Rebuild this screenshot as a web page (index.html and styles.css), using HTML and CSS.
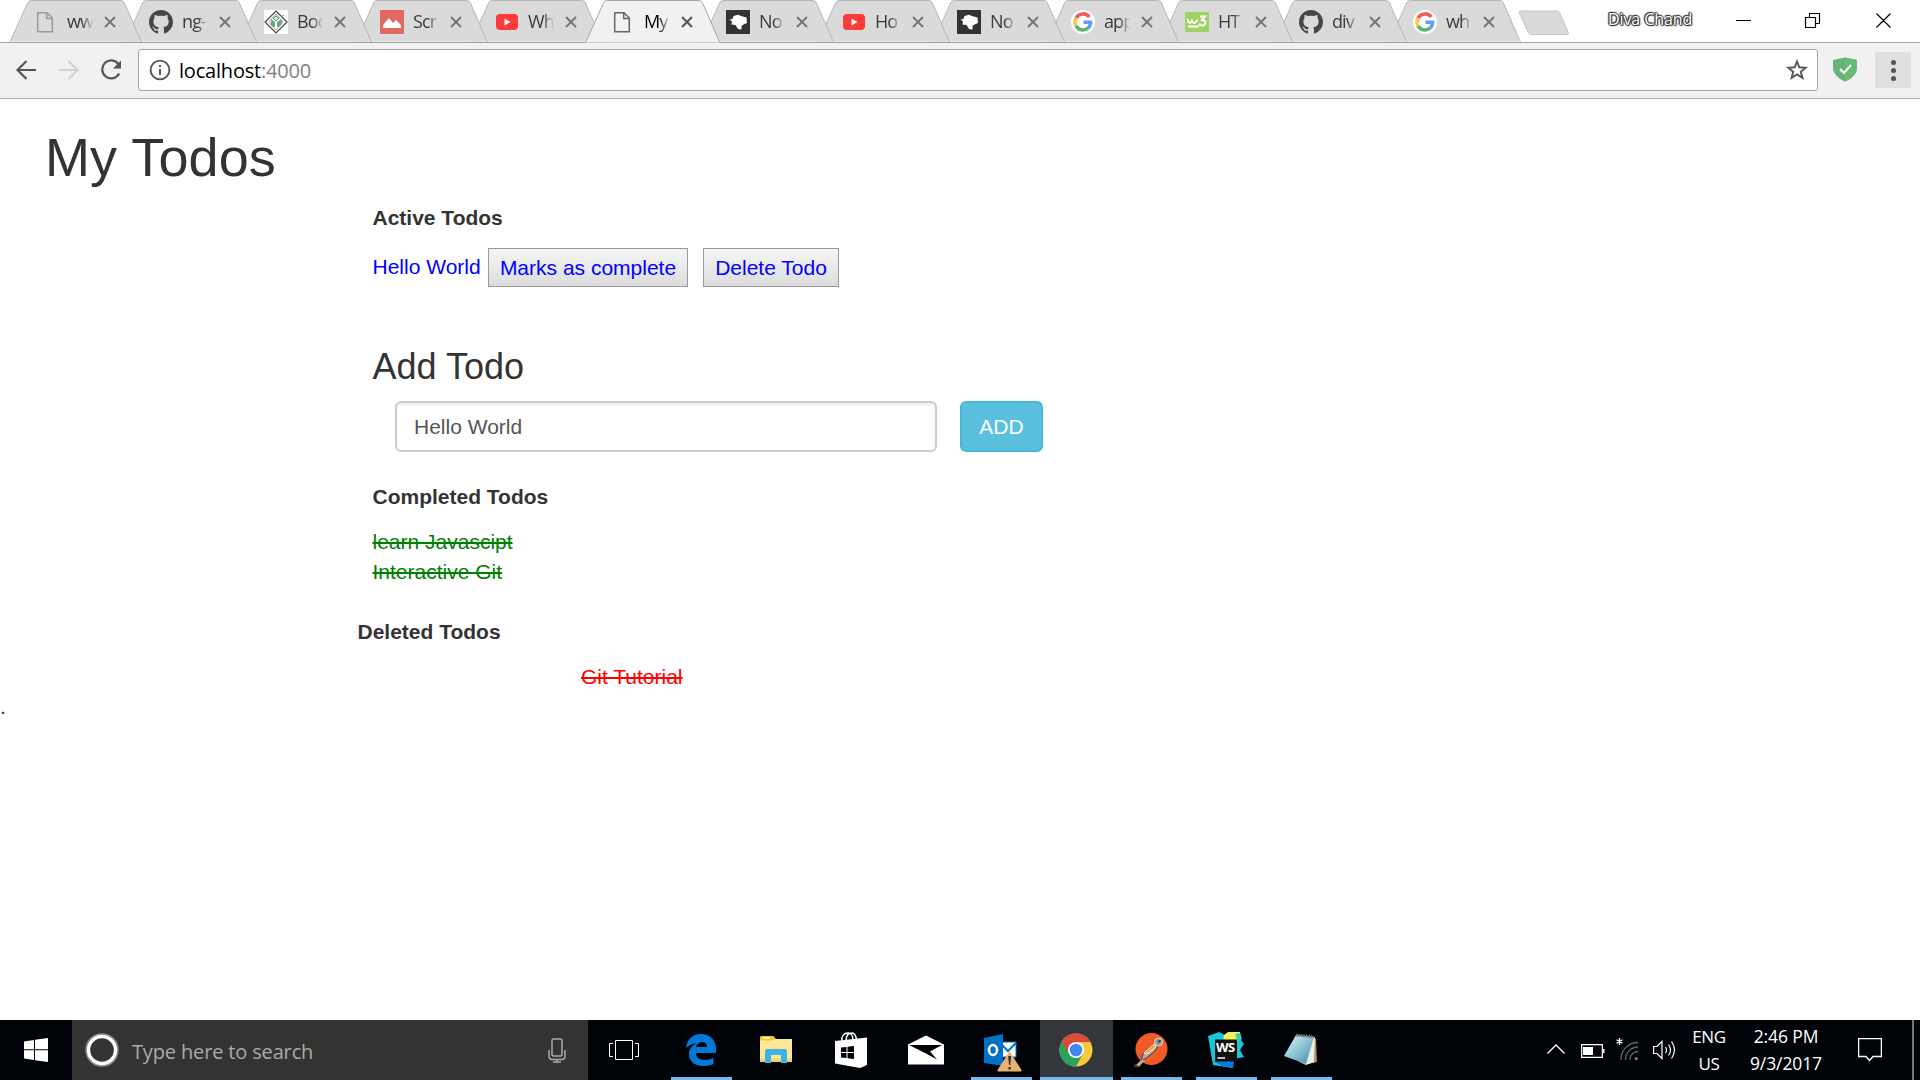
FILE: index.html
```html
<!DOCTYPE html>
<html lang="en">
<head>
<meta charset="utf-8">
<title>My Todos</title>
<link rel="stylesheet" href="styles.css">
</head>
<body>
<svg class="defs" aria-hidden="true">
  <symbol id="shape" viewBox="0 0 136 43"><path d="M0 42.500C1.200 42 1.600 40.500 2 39.500L18 4C19.300 1.500 20 .5 22.500 .5H113C116 .5 117 1.500 118 4L133.500 39.500C134 41 134.500 42.500 135.500 42.500"/></symbol>
  <symbol id="x" viewBox="0 0 12 12"><path d="M1 1 11 11M11 1 1 11" fill="none" stroke="currentColor" stroke-width="2"/></symbol>
  <symbol id="file" viewBox="0 0 24 24"><path d="M3.700 2.700H13L18.300 8V21.800H3.700ZM12.700 2.700V8.500H18.300" fill="none" stroke="currentColor" stroke-width="1.500"/></symbol>
  <symbol id="github" viewBox="0 0 16 16"><path fill="#464646" d="M8 0C3.580 0 0 3.580 0 8c0 3.540 2.290 6.530 5.470 7.590.4.070.55-.17.55-.38 0-.19-.010-.82-.010-1.490-2.010.37-2.530-.49-2.690-.94-.090-.23-.48-.94-.82-1.130-.28-.15-.68-.52-.010-.53.63-.010 1.080.58 1.230.82.72 1.210 1.870.87 2.330.66.070-.52.28-.87.510-1.070-1.780-.2-3.640-.89-3.640-3.950 0-.87.31-1.590.82-2.150-.080-.2-.36-1.020.080-2.120 0 0 .67-.21 2.200.82.64-.18 1.320-.27 2-.27s1.360.090 2 .27c1.530-1.040 2.200-.82 2.200-.82.44 1.100.16 1.920.080 2.120.51.56.82 1.270.82 2.150 0 3.070-1.870 3.750-3.650 3.950.29.25.54.73.54 1.480 0 1.070-.010 1.930-.010 2.200 0 .21.15.46.55.38A8.010 8.010 0 0 0 16 8c0-4.420-3.580-8-8-8Z"/></symbol>
  <symbol id="youtube" viewBox="0 0 24 24"><rect x="1" y="4" width="22" height="16" rx="4" fill="#ff3a3a"/><path d="M9.500 8.500 15.500 12 9.500 15.500Z" fill="#fff"/></symbol>
  <symbol id="node" viewBox="0 0 24 24"><path d="M0 0H24V24H0Z" fill="#333"/><path d="M3.500 9.500 6.500 9 7.500 6 12 4.700 15 6 20.500 7.500 21 13 17.500 14.500 15.500 16 15.500 19.500 12 19 9.500 15 5.500 14.500 6 11.500Z" fill="#fff"/></symbol>
  <symbol id="google" viewBox="0 0 24 24"><circle cx="12" cy="12" r="12" fill="#fff"/><g fill="none" stroke-width="3.600"><path d="M18.400 7A8 8 0 0 0 5 8.200" stroke="#f0605a"/><path d="M5 8.200A8 8 0 0 0 5 15.800" stroke="#fbc94e"/><path d="M5 15.800A8 8 0 0 0 17 18.200" stroke="#57b974"/><path d="M17 18.200A8 8 0 0 0 19.500 12.300H12.500" stroke="#659cf5"/></g></symbol>
</svg>

<header class="browser">
  <div class="strip">
    <div class="tab w115 z13"><svg class="shape"><use href="#shape"/></svg><svg class="fav file"><use href="#file"/></svg><span class="label">ww</span><svg class="close"><use href="#x"/></svg></div>
    <div class="tab w115 z12"><svg class="shape"><use href="#shape"/></svg><svg class="fav"><use href="#github"/></svg><span class="label">ng-</span><svg class="close"><use href="#x"/></svg></div>
    <div class="tab w116 z11"><svg class="shape"><use href="#shape"/></svg><svg class="fav" viewBox="0 0 24 24"><path d="M0 0H24V24H0Z" fill="#fff"/><path d="M12 1 23 12 12 23 1 12Z" fill="none" stroke="#444" stroke-width="1.200"/><path d="M12 4 19 12 12 20 4.500 12Z" fill="none" stroke="#aaa"/><path d="M7 9 11 12V17C8 17 6 15 7 12ZM13 17V12L18 9C18 14 17 17 13 17Z" fill="#6da583"/><path d="M9 8 12 6 15 8 12 11ZM17 7 20 5" fill="#cfe2d5" stroke="#5f9c77"/></svg><span class="label">Boo</span><svg class="close"><use href="#x"/></svg></div>
    <div class="tab w115 z10"><svg class="shape"><use href="#shape"/></svg><svg class="fav" viewBox="0 0 24 24"><rect width="24" height="24" rx="1" fill="#e2695f"/><path d="M3 18V15L9 8 13 13 16 10 21 15V18Z" fill="#fff"/></svg><span class="label">Scr</span><svg class="close"><use href="#x"/></svg></div>
    <div class="tab w116 z9"><svg class="shape"><use href="#shape"/></svg><svg class="fav"><use href="#youtube"/></svg><span class="label">Wh</span><svg class="close"><use href="#x"/></svg></div>
    <div class="tab w115 active"><svg class="shape"><use href="#shape"/></svg><svg class="fav file"><use href="#file"/></svg><span class="label">My</span><svg class="close"><use href="#x"/></svg></div>
    <div class="tab w116 z7"><svg class="shape"><use href="#shape"/></svg><svg class="fav"><use href="#node"/></svg><span class="label">No</span><svg class="close"><use href="#x"/></svg></div>
    <div class="tab w115 z6"><svg class="shape"><use href="#shape"/></svg><svg class="fav"><use href="#youtube"/></svg><span class="label">Ho</span><svg class="close"><use href="#x"/></svg></div>
    <div class="tab w114 z5"><svg class="shape"><use href="#shape"/></svg><svg class="fav"><use href="#node"/></svg><span class="label">No</span><svg class="close"><use href="#x"/></svg></div>
    <div class="tab w114 z4"><svg class="shape"><use href="#shape"/></svg><svg class="fav"><use href="#google"/></svg><span class="label">app</span><svg class="close"><use href="#x"/></svg></div>
    <div class="tab w114 z3"><svg class="shape"><use href="#shape"/></svg><svg class="fav" viewBox="0 0 24 24"><rect y="2" width="24" height="20" rx="1.500" fill="#9ed063"/><path d="M2.500 9C3 14 6 14 7 9.500 7 14 11 14 12.500 9.500M3 16.500H14M15 6.500H20L17 10C22 10 21 16 17 15.500 15.500 15.500 14.500 14.500 14.500 13.500" fill="none" stroke="#fff" stroke-width="1.900"/></svg><span class="label">HT</span><svg class="close"><use href="#x"/></svg></div>
    <div class="tab w114 z2"><svg class="shape"><use href="#shape"/></svg><svg class="fav"><use href="#github"/></svg><span class="label">div</span><svg class="close"><use href="#x"/></svg></div>
    <div class="tab w114 z1"><svg class="shape"><use href="#shape"/></svg><svg class="fav"><use href="#google"/></svg><span class="label">wh</span><svg class="close"><use href="#x"/></svg></div>
    <svg class="newtab" viewBox="0 0 52 26"><path d="M3 1H38C40 1 41 1.500 42 3.500L50 22C50.800 24 50.500 24.500 48.500 24.500H14C12 24.500 11 24 10 22L1.500 3.500C1 2 1 1 3 1Z" fill="#dadada" stroke="#c4c4c4"/></svg>
    <span class="user">Diva Chand</span>
    <svg class="winctl" viewBox="0 0 160 20" fill="none" stroke="#000"><path d="M0 8.500H15M69.500 5.500H79.500V15.500H69.500ZM73.500 5V1.500H83.500V11.500H80M140.500 1.500 154.500 15.500M154.500 1.500 140.500 15.500" stroke-width="1.200"/></svg>
  </div>
  <div class="toolbar">
    <svg class="nav" viewBox="0 0 106 22" fill="none" stroke="#555" stroke-width="2.200"><path d="M20 11H2M10.500 2 1.500 11 10.500 20"/><path stroke="#d2d2d2" d="M43 11H61M52.500 2 61.500 11 52.500 20"/><path d="M102.500 5A9 9 0 1 0 103.200 14.500"/><path d="M105 1.500V9.500H97Z" fill="#555" stroke="none"/></svg>
    <div class="omnibox">
      <svg class="info" viewBox="0 0 22 22"><circle cx="11" cy="11" r="9.400" fill="none" stroke="#555" stroke-width="1.900"/><path d="M10 10H12V16H10ZM10 6H12V8H10Z" fill="#555"/></svg>
      <span class="url">localhost<span class="port">:4000</span></span>
      <svg class="star" viewBox="0 0 22 22"><path d="M11 2.500 13.300 8.300 19.800 8.700 14.800 12.800 16.400 19 11 15.500 5.600 19 7.200 12.800 2.200 8.700 8.700 8.300Z" fill="none" stroke="#555" stroke-width="1.900"/></svg>
    </div>
    <svg class="shield" viewBox="0 0 24 25"><path d="M12 .5 24 3V11C24 17 18 22 12 24.500 6 22 0 17 0 11V3Z" fill="#67b279"/><path d="M12 .5 24 3V11C24 17 18 22 12 24.500Z" fill="#68bc71"/><path d="M7 12 11 16 18 8" fill="none" stroke="#fff" stroke-width="2"/></svg>
    <div class="menu"><i></i><i></i><i></i></div>
  </div>
</header>

<main class="page">
  <h1>My Todos</h1>
  <section class="col">
    <h2 class="head">Active Todos</h2>
    <div class="todo"><span>Hello World</span><button class="mark">Marks as complete</button><button class="del">Delete Todo</button></div>
    <h3>Add Todo</h3>
    <form class="add"><input type="text" value="Hello World"><button type="button">ADD</button></form>
    <h2 class="head completed">Completed Todos</h2>
    <ul class="done"><li>learn Javascipt</li><li>Interactive Git</li></ul>
  </section>
  <section class="deleted">
    <h2 class="head">Deleted Todos</h2>
    <p>Git Tutorial</p>
  </section>
  <span class="dot">.</span>
</main>

<footer class="taskbar">
  <div class="start"><svg width="24" height="24" viewBox="0 0 24 24" fill="#fff"><path d="M0 3.500 10 2V11.300H0ZM11 1.800 24 0V11.300H11ZM0 12.300H10V22L0 20.500ZM11 12.300H24V24L11 22.200Z"/></svg></div>
  <div class="search">
    <svg class="cortana" viewBox="0 0 34 34"><circle cx="17" cy="17" r="15.800" fill="none" stroke="#888" stroke-width="2"/><circle cx="17" cy="17" r="13.500" fill="none" stroke="#fff" stroke-width="3.400"/></svg>
    <span class="hint">Type here to search</span>
    <svg class="mic" viewBox="0 0 18 25" fill="none" stroke="#aaa" stroke-width="1.500"><rect x="4" y="1" width="10" height="17" rx="1.500"/><path d="M1 12V18C1 20 2 21.500 4 21.500H14C16 21.500 17 20 17 18V12M9 21.500V24M5 24H13"/></svg>
  </div>
  <div class="app view"><svg width="30" height="20" viewBox="0 0 30 20" fill="none" stroke="#fff"><path d="M6.500.5H23.500V19.500H6.500ZM4 3.500H.5V16.500H4M26 3.500H29.500V16.500H26"/></svg></div>
  <div class="app open"><svg width="32" height="32" viewBox="0 0 32 32"><path fill="#0078d7" d="M1 14C2 5 8 0 16 0 26 0 31 7 31 15V19H11C11 24 15 26 20 26 23 26 26 25 28.500 23.700V30C25 31.500 22 32 18 32 9 32 4 27 4 20 4 15 7 11.500 11.500 9.500 7 9.500 3.500 11.500 1 14ZM11 13H22C22 10 20 8 17 8 14 8 11.500 10 11 13Z"/></svg></div>
  <div class="app"><svg width="32" height="28" viewBox="0 0 32 28"><path d="M0 2C0 1 .5 0 2 0H13L16 3H32V25H0Z" fill="#ffe794"/><path d="M0 4V2C0 1 .5 0 2 0H13L15 3 13 4.500H0Z" fill="#f8c830"/><path d="M3 2H10" stroke="#fff" stroke-width="1.300"/><path d="M0 23H32V26H0Z" fill="#f4d16e"/><path d="M5 15C5 14 6 13 7 13H25C26 13 27 14 27 15V27H21V19H11V27H5Z" fill="#3bb3e8"/></svg></div>
  <div class="app"><svg width="32" height="36" viewBox="0 0 32 36"><path d="M0 9 32 5.500V33L25 36 0 31.500Z" fill="#fff"/><path d="M7 9C6 4 9 1 13 1 16 1 18 4 18 8M11 9C11 4 13 1 17 1 20 1 21 4 21.500 8" fill="none" stroke="#fff" stroke-width="1.500"/><path d="M6 15.500 11.500 15V20H6ZM12.500 14.800 19 14V20H12.500ZM6 21H11.500V26L6 25.500ZM12.500 21H19V27L12.500 26.200Z" fill="#000308"/></svg></div>
  <div class="app"><svg width="36" height="30" viewBox="0 0 36 30"><path d="M0 9.500 18 .5 36 9.500V29.500H0Z" fill="#fff"/><path d="M1 10H34L22 16.500 29 24.500 17 18Z" fill="#000308"/></svg></div>
  <div class="app open"><svg class="outlook" width="38" height="38" viewBox="0 0 38 38"><path d="M15 8H32V23H15Z" fill="#fff" stroke="#0072c6"/><path d="M15 8 24 17 32 9" fill="none" stroke="#0072c6" stroke-width="2"/><path d="M0 4 19 0V32L0 29Z" fill="#0072c6"/><ellipse cx="9" cy="16" rx="4" ry="5" fill="none" stroke="#fff" stroke-width="2.600"/><path d="M25.500 18 37 36V37H14V36Z" fill="#e9b174" stroke="#e9b174" stroke-linejoin="round"/><path d="M24.200 22H27L26.300 31H25ZM24.500 33H26.800V35.500H24.500Z" fill="#333"/></svg></div>
  <div class="app open current"><svg width="34" height="34" viewBox="0 0 34 34"><circle cx="17" cy="17" r="16.500" fill="#fdc93c"/><path d="M17 17 2.700 8.800A16.500 16.500 0 0 0 17 33.500L24 21Z" fill="#2ba15d"/><path d="M17 9H31.500A16.500 16.500 0 0 0 2.700 8.800L9.800 21 17 17Z" fill="#d94a3d"/><path d="M2.700 8.800 9.800 21 17 25 17 33.500A16.500 16.500 0 0 1 2.700 8.800Z" fill="#2ba15d"/><circle cx="17" cy="17" r="8" fill="#fff"/><circle cx="17" cy="17" r="6.300" fill="#4385f4"/></svg></div>
  <div class="app open"><svg width="34" height="36" viewBox="0 0 34 36"><circle cx="17.500" cy="17" r="16" fill="#f15a24"/><path d="M20 12 9 22 7 29 11 27 21 19 24 13Z" fill="#aaa" stroke="#444"/><path d="M20 12 10 21 13 22 22 15Z" fill="#f7a33c" stroke="#fff" stroke-width=".8"/><circle cx="24.500" cy="10" r="4" fill="#999" stroke="#ddd"/><path d="M23 9 27 8 26 11Z" fill="#333"/><path d="M7 28 1 34 5 35 11 28Z" fill="#b8a9a4"/><path d="M1 32 0 35H6Z" fill="#8c2b14"/></svg></div>
  <div class="app open"><svg width="38" height="37" viewBox="0 0 38 37"><path d="M1 4 12 0 18 3 33 1 34 8 37 12 33 18 37 25 27 27 26 36 6 33Z" fill="#16c7d9"/><path d="M6 29 26 27V36L15 34Z" fill="#087cdc"/><path d="M17 3 21 0H33L34 7 31 9H16Z" fill="#f4f15a"/><path d="M28 2 33 1 35 7 31 10Z" fill="#2ed0bd"/><path d="M8 7.500H30V29.500H8Z" fill="#111"/><path d="M10.500 26H18" stroke="#fff" stroke-width="1.500"/><text x="9" y="20" class="ws">WS</text></svg></div>
  <div class="app open"><svg width="34" height="34" viewBox="0 0 34 34"><defs><linearGradient id="pad" x2="1" y2="1"><stop stop-color="#e5f5f8"/><stop offset=".5" stop-color="#8cc6d3"/><stop offset="1" stop-color="#3a8799"/></linearGradient></defs><path d="M29 5 32 6 33 29 24 31Z" fill="#b98c4d"/><path d="M26 5 31 4 30 29 22 32 14 28Z" fill="#e8eced"/><path d="M12 2 30 4 22 31 0 23Z" fill="url(#pad)"/><path d="M12 2 30 4" stroke="#777" stroke-width="3" stroke-dasharray="1.500 1"/></svg></div>
  <div class="tray">
    <svg class="caret" viewBox="0 0 18 10"><path d="M.5 9.500 9 1 17.500 9.500" fill="none" stroke="#fff" stroke-width="1.300"/></svg>
    <svg class="battery" viewBox="0 0 24 14"><path d="M.7.7H21.300V13.300H.7Z" fill="none" stroke="#fff" stroke-width="1.200"/><path d="M2 3H12V11H2ZM22 5H23.500V9H22Z" fill="#fff"/></svg>
    <svg class="wifi" viewBox="0 0 22 22" fill="none" stroke="#666" stroke-width="1.300"><path d="M5 22A17 17 0 0 1 22 4.500M9.500 22A12.500 12.500 0 0 1 22 9M14 22A8 8 0 0 1 22 13.500"/><circle cx="20.300" cy="20.500" r="1.500" fill="#888" stroke="none"/><path stroke="#fff" d="M3.500 0V7M.5 1.700 6.500 5.300M6.500 1.700.5 5.300"/></svg>
    <svg class="volume" viewBox="0 0 23 20" fill="none" stroke="#fff" stroke-width="1.200"><path d="M.6 6.500H4L9 1.500V18.500L4 13.500H.6ZM12.500 7Q14.500 10 12.500 13M15.500 4.500Q19.500 10 15.500 15.500M18.500 1.500Q24.500 10 18.500 18.500"/></svg>
    <div class="lang">ENG<br>US</div>
    <div class="clock">2:46 PM<br>9/3/2017</div>
    <svg class="action" viewBox="0 0 24 25"><path d="M.6.6H23.400V18.500H15L11.500 22.500 8 18.500H.6Z" fill="none" stroke="#fff" stroke-width="1.300"/></svg>
    <i class="peek"></i>
  </div>
</footer>
</body>
</html>
```
FILE: styles.css
```css
* { box-sizing: border-box; }
html, body { height: 100%; }
body { margin: 0; width: 1920px; height: 1080px; overflow: hidden; display: flex; flex-direction: column; background: #fff; font-family: "Liberation Sans", Arial, sans-serif; }
svg { display: block; flex: none; }
.defs { position: absolute; width: 0; height: 0; }

.browser { flex: none; height: 99px; font-family: "Open Sans", "Noto Sans", sans-serif; }
.strip { height: 43px; padding-left: 8px; display: flex; background: linear-gradient(#fff, #fff) 0 0 / 100% 42px no-repeat #a9a9a9; }
.tab { position: relative; flex: none; height: 43px; display: flex; align-items: flex-start; padding-left: 26px; color: #777; }
.w114 { width: 114px; }
.w115 { width: 115px; }
.w116 { width: 116px; }
.z13 { z-index: 13; } .z12 { z-index: 12; } .z11 { z-index: 11; } .z10 { z-index: 10; } .z9 { z-index: 9; }
.z7 { z-index: 7; } .z6 { z-index: 6; } .z5 { z-index: 5; } .z4 { z-index: 4; } .z3 { z-index: 3; } .z2 { z-index: 2; } .z1 { z-index: 1; }
.shape { position: absolute; left: 0; top: 0; width: 136px; height: 43px; fill: #dadada; stroke: #b4b4b4; border-bottom: 1px solid #a0a0a0; }
.active { z-index: 20; color: #555; }
.active .shape { fill: #f1f1f1; stroke: #a5a5a5; border-bottom: 0; }
.fav { position: relative; width: 24px; height: 24px; margin-top: 10px; }
.file { color: #999; }
.active .file { color: #666; }
.label { position: relative; flex: none; width: 27px; height: 30px; margin: 8px 0 0 9px; overflow: hidden; white-space: nowrap; font-size: 18px; letter-spacing: -.9px; line-height: 27px; color: #3a3a3a; -webkit-mask-image: linear-gradient(90deg, #000 55%, transparent 98%); mask-image: linear-gradient(90deg, #000 55%, transparent 98%); }
.active .label { color: #000; }
.close { position: relative; width: 12px; height: 12px; margin: 16px 0 0 10px; }
.newtab { width: 52px; height: 26px; margin: 10px 0 0 17px; }
.user { width: 90px; margin: 6px 0 0 38px; font-size: 16px; line-height: 26px; color: #fff; white-space: nowrap; letter-spacing: -.1px; text-shadow: 1px 0 1px #333, -1px 0 1px #333, 0 1px 1px #333, 0 -1px 1px #333, 1px 1px 1px #555, -1px -1px 1px #555; }
.winctl { width: 160px; height: 20px; margin: 12px 0 0 38px; }

.toolbar { height: 56px; padding: 6px 9px 0 16px; display: flex; background: #f1f1f1; border-bottom: 1px solid #b0b0b0; }
.nav { width: 106px; height: 22px; margin: 10px 16px 0 0; }
.omnibox { width: 1680px; height: 42px; border: 1px solid #a6a6a6; border-radius: 3px; background: #fff; display: flex; align-items: center; padding: 0 9px 0 10px; }
.info { width: 22px; height: 22px; }
.url { flex: 1; margin-left: 8px; font-size: 20px; letter-spacing: -.2px; color: #000; }
.port { color: #808080; }
.star { width: 22px; height: 22px; }
.shield { width: 24px; height: 25px; margin: 8px 18px 0 15px; }
.menu { width: 36px; height: 36px; margin-top: 3px; border-radius: 3px; background: #dfdfdf; display: flex; flex-direction: column; align-items: center; justify-content: center; gap: 3px; }
.menu i { width: 5px; height: 5px; border-radius: 50%; background: #555; }

.page { flex: 1; padding-top: 29px; font-size: 21px; line-height: 30px; color: #333; }
h1, h2, h3, p, ul { margin: 0; padding: 0; font-weight: 500; }
h1 { padding-left: 45px; font-size: 54px; font-weight: 400; line-height: 59px; letter-spacing: .1px; }
.col { padding: 16px 0 0 372.5px; }
.head { font-size: 21px; font-weight: 700; line-height: 30px; }
.todo { display: flex; align-items: flex-start; margin-top: 15px; color: #00f; }
.todo span { width: 115.5px; margin-top: 4px; white-space: nowrap; }
.todo button { height: 39px; padding: 0; font: inherit; line-height: 30px; color: #00f; border: 1px solid #999; background: linear-gradient(#f6f6f6, #dcdcdc); white-space: nowrap; }
.mark { width: 200px; margin-right: 15px; }
.del { width: 136px; }
h3 { margin-top: 60px; font-size: 36px; font-weight: 400; line-height: 40px; }
.add { display: flex; gap: 23px; margin: 14px 0 0 22.5px; }
.add input { width: 542px; height: 51px; padding: 0 17px; border: 2px solid #ccc; border-radius: 6px; font: inherit; color: #555; box-shadow: inset 0 2px 2px rgba(0,0,0,.075); }
.add button { width: 83px; height: 51px; padding: 0; border: 2px solid #46b8da; border-radius: 6px; background: #5bc0de; color: #fff; font: inherit; }
.completed { margin-top: 30px; }
.done { margin-top: 15px; list-style: none; color: green; text-decoration: line-through; }
.deleted { padding: 30px 0 0 357.5px; }
.deleted p { margin-top: 15px; padding-left: 223.5px; color: red; text-decoration: line-through; }
.dot { display: block; line-height: 30px; color: #333; }

.taskbar { flex: none; height: 60px; display: flex; background: #000308; font-family: "Open Sans", "Noto Sans", sans-serif; }
.start { width: 72px; padding: 18px 0 0 24px; }
.search { width: 516px; background: #333; display: flex; align-items: center; padding: 0 22px 0 13px; }
.cortana { width: 34px; height: 34px; }
.hint { flex: 1; margin-left: 13px; padding-top: 2px; font-size: 20px; letter-spacing: -.15px; color: #aaa; }
.mic { width: 18px; height: 25px; }
.app { width: 75px; padding-right: 1px; display: flex; align-items: center; justify-content: center; }
.view { width: 76px; padding-right: 4px; }
.open { background: linear-gradient(#76b9ed, #76b9ed) 7px 57px / 61px 3px no-repeat; }
.current { width: 73px; margin: 0 1px; background: linear-gradient(#76b9ed, #76b9ed) 0 57px / 73px 3px no-repeat #33373b; }
.outlook { margin: 6px 0 0 4px; }
.ws { font: 700 13px "Open Sans", sans-serif; fill: #fff; letter-spacing: -.6px; }
.tray { flex: 1; display: flex; align-items: flex-start; padding-left: 208px; color: #fff; font-size: 17px; line-height: 27px; text-align: center; }
.caret { width: 18px; height: 10px; margin: 24px 16px 0 0; }
.battery { width: 24px; height: 14px; margin: 24px 11px 0 0; }
.wifi { width: 22px; height: 22px; margin: 18px 15px 0 0; }
.volume { width: 23px; height: 20px; margin: 20px 16px 0 0; }
.lang { width: 34px; margin-top: 3px; letter-spacing: -.3px; white-space: nowrap; }
.clock { width: 76px; margin: 3px 0 0 22px; font-size: 17.5px; letter-spacing: -.1px; white-space: nowrap; }
.action { width: 24px; height: 25px; margin: 18px 30px 0 34px; }
.peek { width: 2px; height: 60px; background: #777; }
```
